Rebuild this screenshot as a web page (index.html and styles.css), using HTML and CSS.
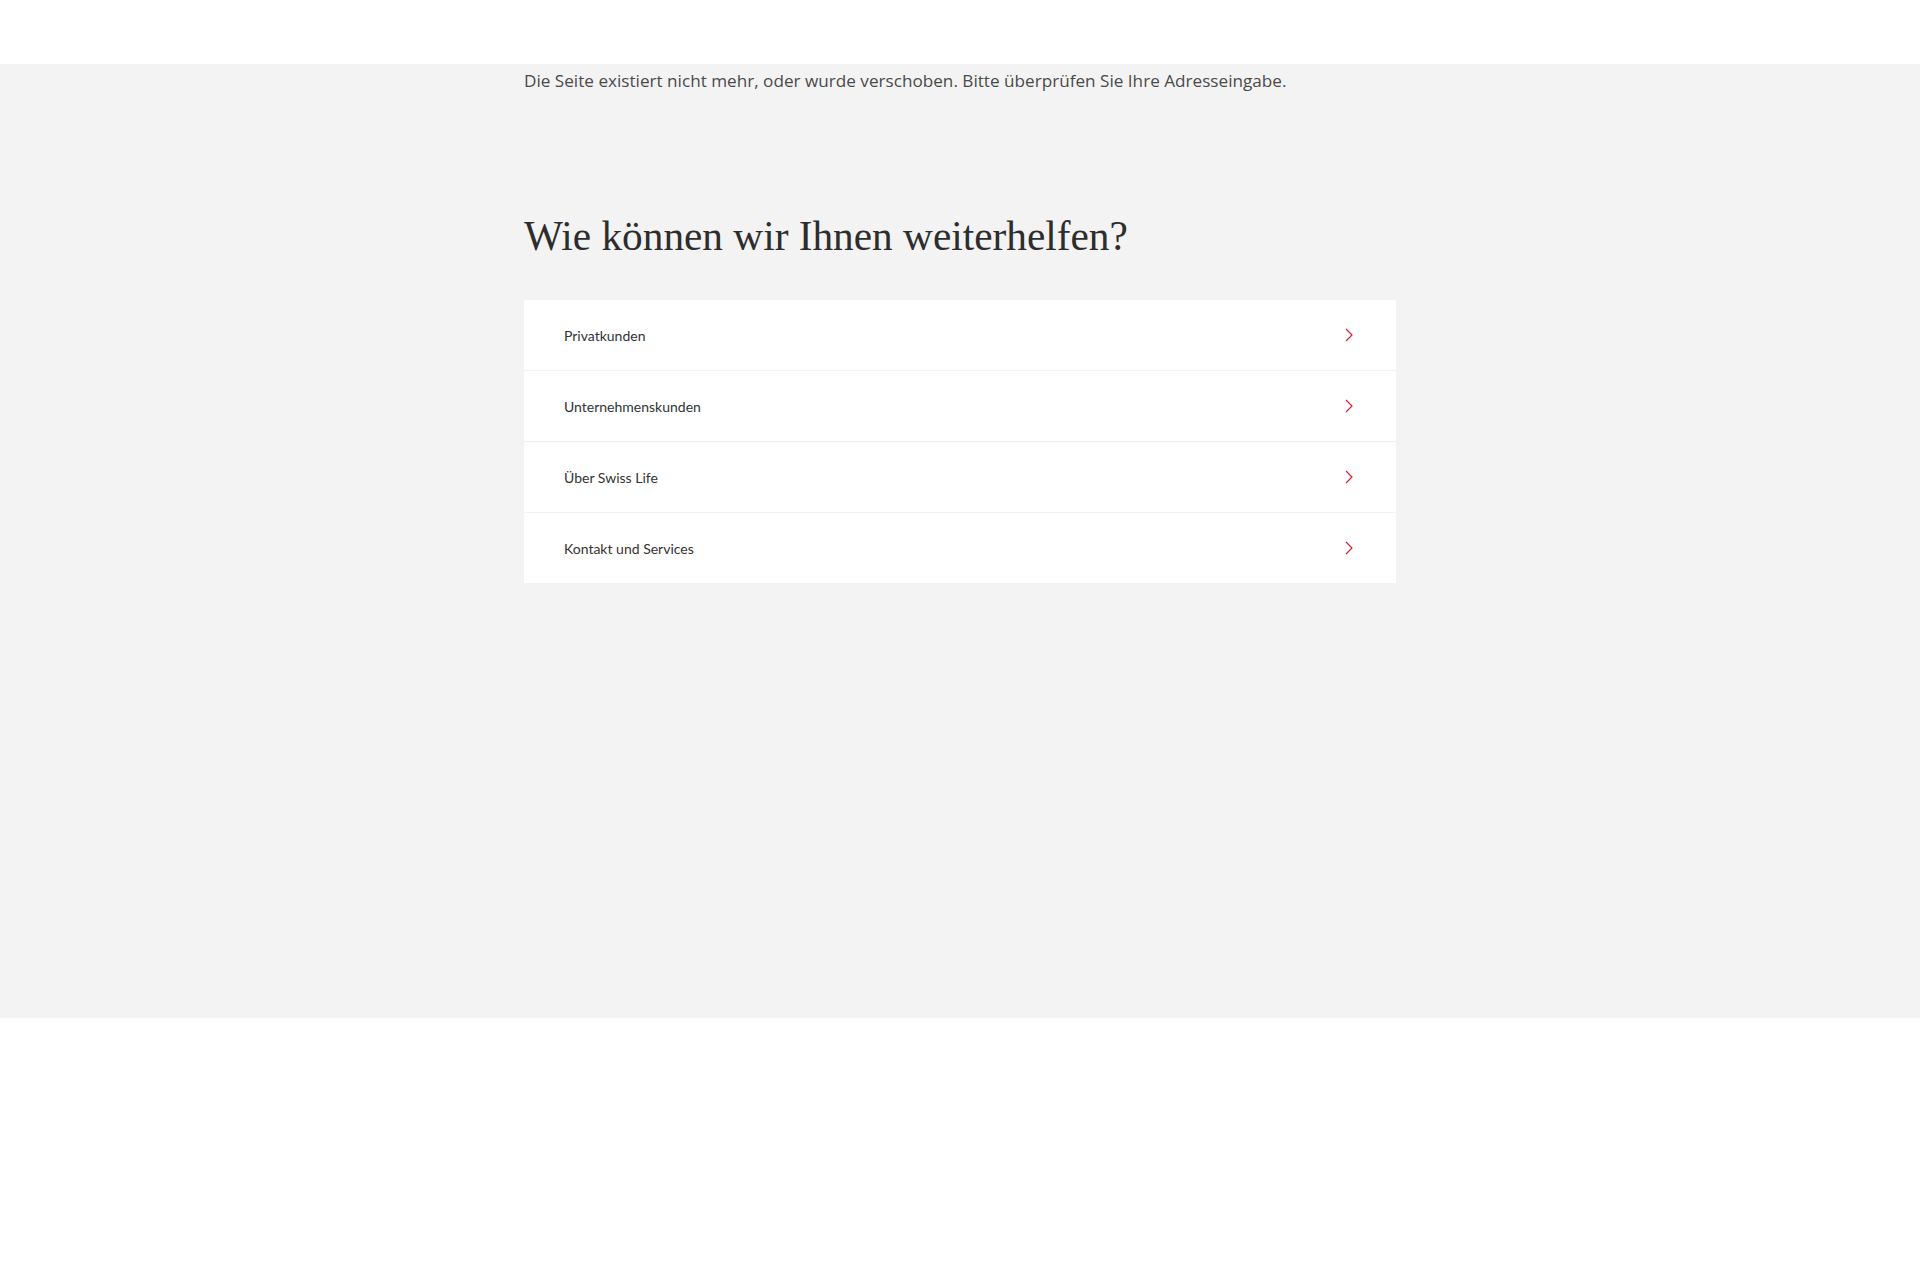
FILE: index.html
```html
<!DOCTYPE html>
<html lang="de">
<head>
<meta charset="utf-8">
<title>Seite nicht gefunden</title>
<link rel="stylesheet" href="styles.css">
</head>
<body>
<header class="topbar"></header>
<main class="main">
  <div class="container">
    <p class="intro">Die Seite existiert nicht mehr, oder wurde verschoben. Bitte überprüfen Sie Ihre Adresseingabe.</p>
    <h1 class="title">Wie können wir Ihnen weiterhelfen?</h1>
    <ul class="links">
      <li><a class="link-row" href="#"><span>Privatkunden</span><svg class="chev" width="8" height="14" viewBox="0 0 8 14"><path d="M1 1l6 6-6 6" fill="none" stroke="#d82034" stroke-width="1.2"/></svg></a></li>
      <li><a class="link-row" href="#"><span>Unternehmenskunden</span><svg class="chev" width="8" height="14" viewBox="0 0 8 14"><path d="M1 1l6 6-6 6" fill="none" stroke="#d82034" stroke-width="1.2"/></svg></a></li>
      <li><a class="link-row" href="#"><span>Über Swiss Life</span><svg class="chev" width="8" height="14" viewBox="0 0 8 14"><path d="M1 1l6 6-6 6" fill="none" stroke="#d82034" stroke-width="1.2"/></svg></a></li>
      <li><a class="link-row" href="#"><span>Kontakt und Services</span><svg class="chev" width="8" height="14" viewBox="0 0 8 14"><path d="M1 1l6 6-6 6" fill="none" stroke="#d82034" stroke-width="1.2"/></svg></a></li>
    </ul>
  </div>
</main>
<footer class="footer"></footer>
</body>
</html>
```
FILE: styles.css
```css
html, body {
  margin: 0;
  padding: 0;
  background: #fff;
}
.topbar {
  height: 64px;
  background: #fff;
}
.main {
  background: #f3f3f3;
  height: 954px;
}
.container {
  width: 872px;
  margin: 0 auto;
}
.intro {
  margin: 0;
  padding-top: 5px;
  font-family: "Open Sans", sans-serif;
  font-size: 17.15px;
  line-height: 24px;
  color: #4a4a4a;
}
.title {
  margin: 0;
  padding-top: 118px;
  font-family: "Liberation Serif", serif;
  font-weight: 400;
  font-size: 41.3px;
  line-height: 50px;
  color: #2d2d2d;
}
.links {
  list-style: none;
  margin: 39px 0 0;
  padding: 0;
  background: #fff;
}
.links li + li {
  border-top: 1px solid #f2f2f2;
}
.link-row {
  display: flex;
  align-items: center;
  justify-content: space-between;
  height: 70px;
  padding: 0 43px 0 40px;
  text-decoration: none;
  font-family: "Lato", sans-serif;
  font-size: 14px;
  color: #333;
}
.chev {
  display: block;
}
.footer {
  height: 262px;
  background: #fff;
}
```
